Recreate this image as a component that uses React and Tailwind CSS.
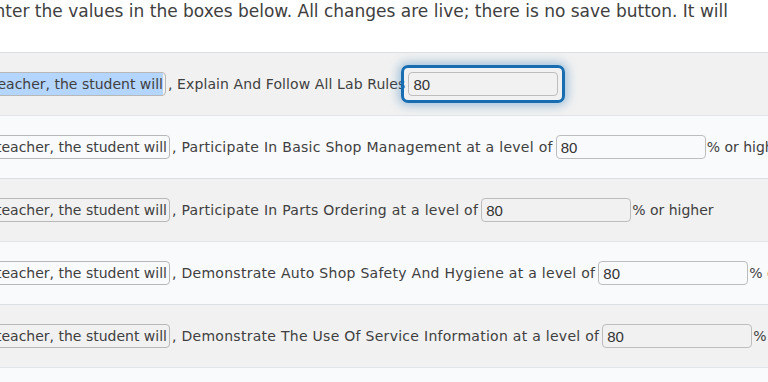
import React from 'react';

const rows = [
  { text: 'Explain And Follow All Lab Rules', suffix: '', focused: true },
  { text: 'Participate In Basic Shop Management at a level of', suffix: '% or higher' },
  { text: 'Participate In Parts Ordering at a level of', suffix: '% or higher' },
  { text: 'Demonstrate Auto Shop Safety And Hygiene at a level of', suffix: '% or higher' },
  { text: 'Demonstrate The Use Of Service Information at a level of', suffix: '% or higher' },
];

const LEAD = 'With guidance from the teacher, the student will';

function ScoreInput({ focused }) {
  const input = (
    <input
      type="text"
      defaultValue="80"
      className="w-[150px] h-[24px] border border-[#bdbdbd] rounded-[4px] bg-transparent px-[4px] text-[15px] text-[#333] font-['Liberation_Sans',Arial,sans-serif] outline-none"
    />
  );
  if (!focused) return input;
  // focus ring drawn over the row, like the browser's outline
  return (
    <span className="relative inline-flex">
      {input}
      <span className="pointer-events-none absolute -inset-[7px] rounded-[7px] border-[3px] border-[#176db2] shadow-[0_0_10px_3px_rgba(23,109,178,0.35)]" />
    </span>
  );
}

// The lead-in box is wider than the visible part; the page is scrolled so its start is off-screen.
function LeadBox({ selected }) {
  return (
    <div
      className={`${selected ? 'w-[256px]' : 'w-[260px]'} h-[24px] flex items-center justify-end overflow-hidden border border-[#b8b8b8] rounded-[4px] pr-[2px]`}
    >
      <span className={selected ? 'bg-[#b4d5fe] h-[22px] leading-[22px]' : 'leading-[22px]'}>{LEAD}</span>
    </div>
  );
}

export default function App() {
  return (
    <div className="w-[768px] h-[382px] overflow-hidden bg-white text-[#404040] font-['DejaVu_Sans',sans-serif]">
      {/* intro line, clipped on the left by the scrolled page */}
      <div className="flex justify-end w-[728px] h-[53px] whitespace-nowrap text-[17px] leading-[24px] -mt-[1px]">
        Please enter the values in the boxes below. All changes are live; there is no save button. It will
      </div>

      <div className="-ml-[90px] w-[1000px] border-b border-[#e1e4e9]">
        {rows.map((r, i) => (
          <div
            key={i}
            className={`flex items-center h-[63px] border-t whitespace-nowrap text-[14px] ${
              i % 2 === 0 ? 'bg-[#f1f1f1] border-[#dcdfe3]' : 'bg-[#f9fafc] border-[#e1e4e9]'
            }`}
          >
            <LeadBox selected={r.focused} />
            <span className={`ml-[2px] mr-[3px] ${r.focused ? 'tracking-[0.1px]' : 'tracking-[0.28px]'}`}>, {r.text}</span>
            <ScoreInput focused={r.focused} />
            {r.suffix && <span className="ml-[1px]">{r.suffix}</span>}
          </div>
        ))}
        <div className="h-[40px] bg-[#f9fafc] border-t border-[#e1e4e9]" />
      </div>
    </div>
  );
}
